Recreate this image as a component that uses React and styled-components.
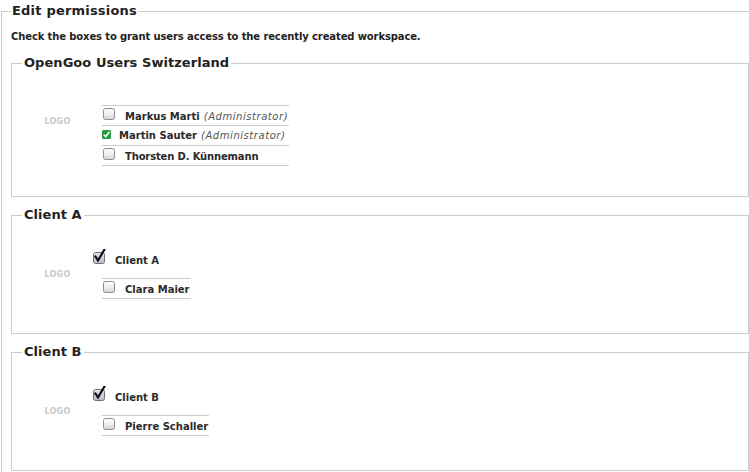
import styled, { createGlobalStyle } from 'styled-components';

const GlobalStyle = createGlobalStyle`
    html, body {
        margin: 0;
        padding: 0;
        background: #fff;
        overflow: hidden;
    }
    body {
        font-family: "DejaVu Sans", Verdana, sans-serif;
        color: #333;
    }
`;

const Outer = styled.fieldset`
    margin: 3px -10px 0 1px;
    padding: 0 9px;
    min-width: 0;
    border: 1px solid #ccc;
    border-bottom: none;
`;

const Legend = styled.legend`
    padding: 0 ${(p) => (p.$inner ? '2px' : '1px')};
    font-size: 13px;
    line-height: 16px;
    font-weight: bold;
    color: #222;
    letter-spacing: ${(p) => (p.$inner ? '0.05px' : '0.2px')};
`;

const Intro = styled.p`
    margin: 11px 0 12px;
    font-size: 10px;
    line-height: 13px;
    font-weight: bold;
    color: #222;
    letter-spacing: -0.12px;
`;

const Group = styled.fieldset`
    margin: 0 0 10px;
    padding: ${(p) => p.$pad};
    min-width: 0;
    border: 1px solid #ccc;
`;

const Body = styled.div`
    display: grid;
    grid-template-columns: 71px auto;
    align-items: center;
`;

const Logo = styled.div`
    text-align: center;
    font-size: 8px;
    font-weight: bold;
    color: #c8c8c8;
    letter-spacing: 0.3px;
`;

const Members = styled.div`
    display: flex;
    flex-direction: column;
    align-items: flex-start;
`;

const Header = styled.div`
    height: 29px;
    display: flex;
    align-items: baseline;
`;

const List = styled.ul`
    margin: 0 0 0 9px;
    padding: 0;
    list-style: none;
    border-top: 1px solid #ccc;
`;

const Row = styled.li`
    height: 19px;
    display: flex;
    align-items: baseline;
    border-bottom: 1px solid #ccc;
    padding-right: 1px;
`;

const Name = styled.span`
    font-size: 10px;
    line-height: 19px;
    font-weight: bold;
    color: #2a2a2a;
    white-space: nowrap;
    letter-spacing: ${(p) => (p.$tight ? '-0.15px' : '0')};
`;

const Role = styled.span`
    margin-left: 4px;
    font-weight: normal;
    font-style: italic;
    color: #555;
    letter-spacing: 0.55px;
`;

const BoxIcon = styled.svg`
    flex: none;
    margin: ${(p) => p.$margin};
`;

function Unchecked() {
    return (
        <BoxIcon width="12" height="12" viewBox="0 0 12 12" $margin="2px 10px 2px 1px">
            <defs>
                <linearGradient id="ub" x1="0" y1="0" x2="0" y2="1">
                    <stop offset="0" stopColor="#fdfdfd" />
                    <stop offset="0.5" stopColor="#eeeeee" />
                    <stop offset="1" stopColor="#d4d4d4" />
                </linearGradient>
            </defs>
            <rect x="0.5" y="0.5" width="11" height="11" rx="2" fill="url(#ub)" stroke="#8c8c8c" />
        </BoxIcon>
    );
}

function Checked() {
    return (
        <BoxIcon width="13" height="15" viewBox="0 0 13 15" $margin="0 9px 2px 0">
            <defs>
                <linearGradient id="cb" x1="0" y1="0" x2="0" y2="1">
                    <stop offset="0" stopColor="#e4e6ee" />
                    <stop offset="1" stopColor="#b9bdcc" />
                </linearGradient>
            </defs>
            <rect x="0.5" y="3.5" width="11" height="11" rx="2" fill="url(#cb)" stroke="#6e7080" />
            <path d="M2.5 7.5 L5 11.5 L11.5 0.5" fill="none" stroke="#111" strokeWidth="2.2" strokeLinecap="square" />
        </BoxIcon>
    );
}

function GreenCheck() {
    return (
        <BoxIcon width="9" height="9" viewBox="0 0 9 9" $margin="0 8px -1px 0">
            <rect x="0" y="0" width="9" height="9" rx="1.5" fill="#1f9a3c" />
            <path d="M1.8 4.6 L3.7 6.8 L7.4 1.8" fill="none" stroke="#fff" strokeWidth="1.6" />
        </BoxIcon>
    );
}

const groups = [
    {
        title: 'OpenGoo Users Switzerland',
        pad: '5px 10px 30px',
        client: null,
        users: [
            { name: 'Markus Marti', role: 'Administrator' },
            { name: 'Martin Sauter', role: 'Administrator', checked: true },
            { name: 'Thorsten D. Künnemann', tight: true },
        ],
    },
    {
        title: 'Client A',
        pad: '26px 10px 34px',
        client: 'Client A',
        users: [{ name: 'Clara Maier' }],
    },
    {
        title: 'Client B',
        pad: '26px 10px 34px',
        client: 'Client B',
        users: [{ name: 'Pierre Schaller' }],
    },
];

export default function App() {
    return (
        <>
            <GlobalStyle />
            <Outer>
                <Legend>Edit permissions</Legend>
                <Intro>Check the boxes to grant users access to the recently created workspace.</Intro>
                {groups.map((g) => (
                    <Group key={g.title} $pad={g.pad}>
                        <Legend $inner>{g.title}</Legend>
                        <Body>
                            <Logo>LOGO</Logo>
                            <Members>
                                <Header>
                                    {g.client && (
                                        <>
                                            <Checked />
                                            <Name>{g.client}</Name>
                                        </>
                                    )}
                                </Header>
                                <List>
                                    {g.users.map((u) => (
                                        <Row key={u.name}>
                                            {u.checked ? <GreenCheck /> : <Unchecked />}
                                            <Name $tight={u.tight}>
                                                {u.name}
                                                {u.role && <Role>({u.role})</Role>}
                                            </Name>
                                        </Row>
                                    ))}
                                </List>
                            </Members>
                        </Body>
                    </Group>
                ))}
            </Outer>
        </>
    );
}
